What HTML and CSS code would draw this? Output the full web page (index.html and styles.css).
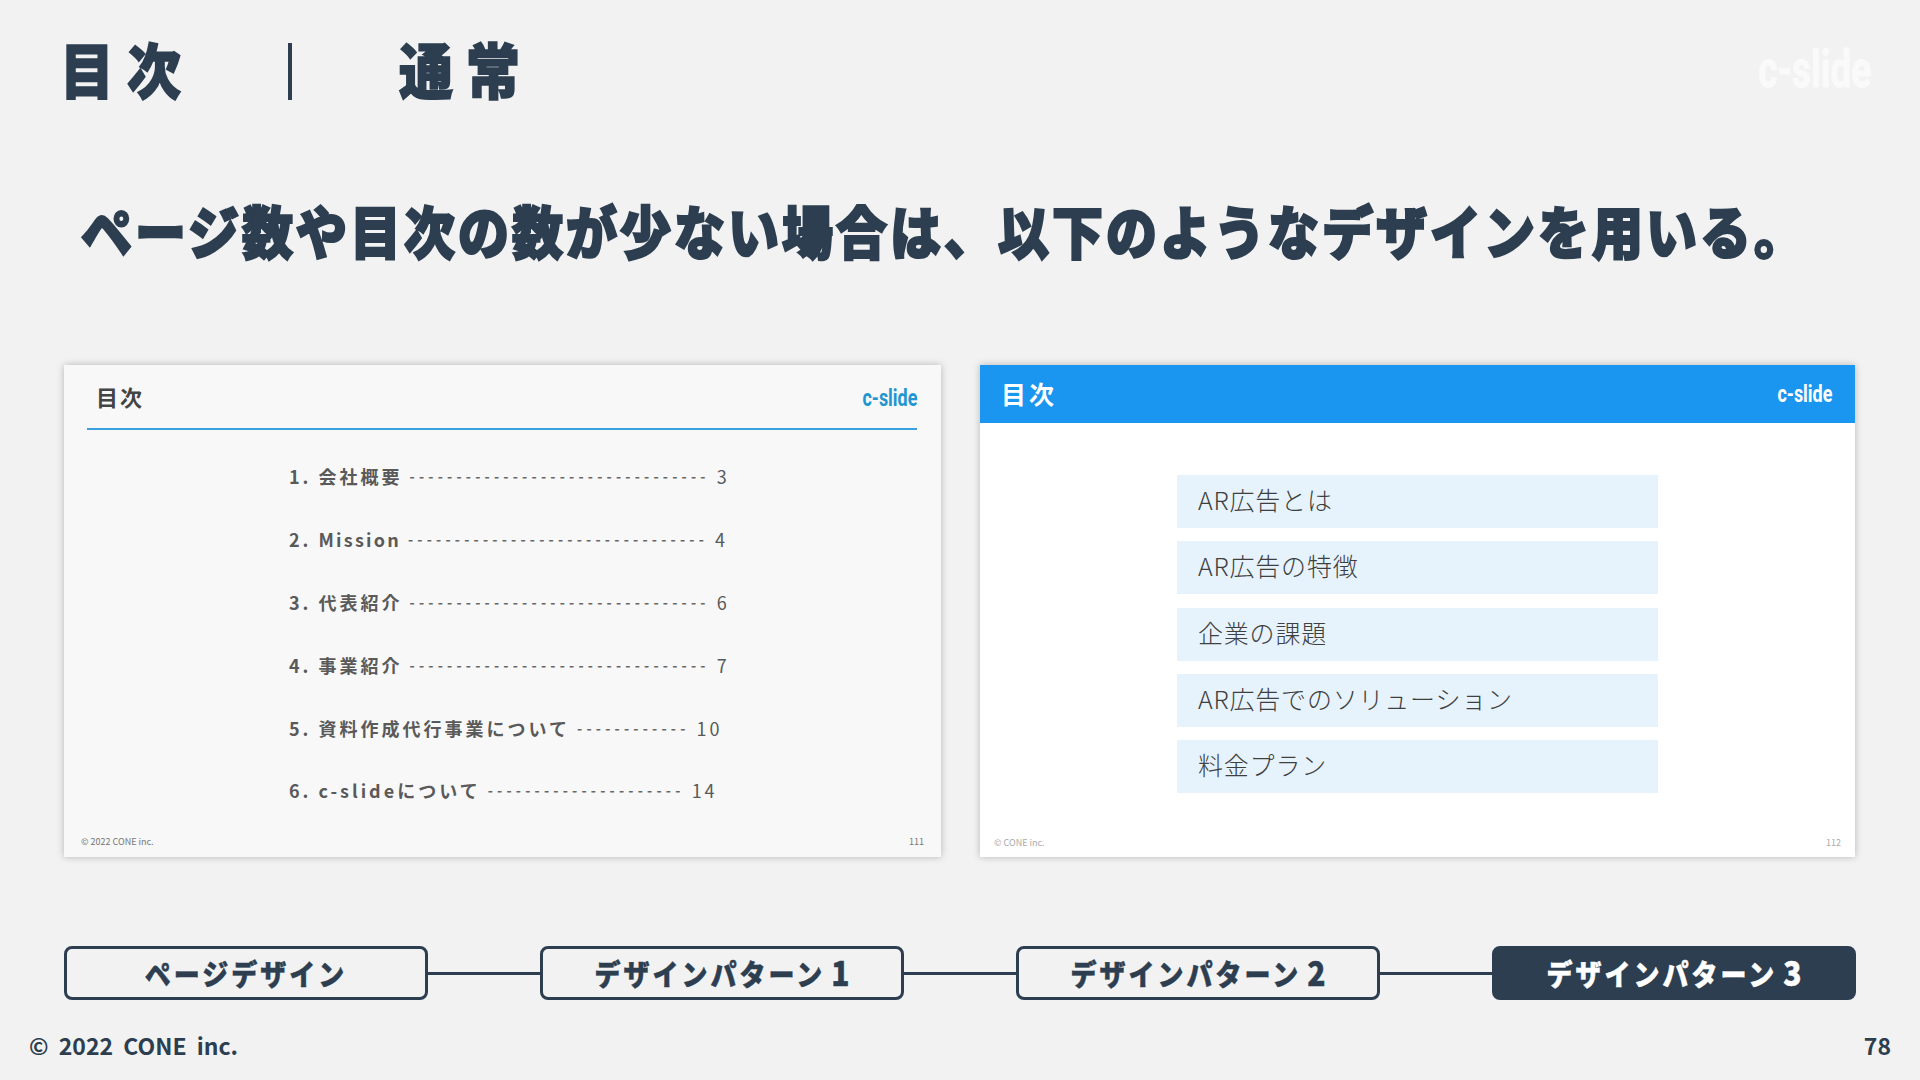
FILE: index.html
```html
<!DOCTYPE html>
<html lang="ja">
<head>
<meta charset="utf-8">
<title>目次 | 通常</title>
<link rel="stylesheet" href="styles.css">
</head>
<body>
<div class="slide">
  <header class="top">
    <h1 class="title"><span class="tall">目次</span><i class="bar"></i><span class="tall">通常</span></h1>
    <div class="logo">c-slide</div>
  </header>
  <p class="lead"><span class="tall">ページ数や目次の数が少ない場合は、以下のようなデザインを用いる。</span></p>
  <section class="cards">
    <article class="card card-a">
      <div class="a-head"><span class="a-title">目次</span><span class="a-logo">c-slide</span></div>
      <ol class="toc">
        <li>1. 会社概要 <span class="dash">--------------------------------</span> <span class="num">3</span></li>
        <li><span>2. <span class="latin">Mission</span></span> <span class="dash">--------------------------------</span> <span class="num">4</span></li>
        <li>3. 代表紹介 <span class="dash">--------------------------------</span> <span class="num">6</span></li>
        <li>4. 事業紹介 <span class="dash">--------------------------------</span> <span class="num">7</span></li>
        <li>5. 資料作成代行事業について <span class="dash">------------</span> <span class="num">10</span></li>
        <li>6. c-slideについて <span class="dash">---------------------</span> <span class="num">14</span></li>
      </ol>
      <div class="a-foot"><span>© 2022 CONE inc.</span><span>111</span></div>
    </article>
    <article class="card card-b">
      <div class="b-head"><span class="b-title">目次</span><span class="b-logo">c-slide</span></div>
      <ul class="rows">
        <li>AR広告とは</li>
        <li>AR広告の特徴</li>
        <li>企業の課題</li>
        <li>AR広告でのソリューション</li>
        <li>料金プラン</li>
      </ul>
      <div class="b-foot"><span>© CONE inc.</span><span>112</span></div>
    </article>
  </section>
  <nav class="steps">
    <div class="step"><span class="tall">ページデザイン</span></div>
    <i class="link"></i>
    <div class="step"><span class="tall">デザインパターン<span class="digit">1</span></span></div>
    <i class="link"></i>
    <div class="step"><span class="tall">デザインパターン<span class="digit">2</span></span></div>
    <i class="link"></i>
    <div class="step step-on"><span class="tall">デザインパターン<span class="digit">3</span></span></div>
  </nav>
  <footer class="foot"><span>© 2022 CONE inc.</span><span>78</span></footer>
</div>
</body>
</html>
```
FILE: styles.css
```css
* { box-sizing: border-box; }
html, body { margin: 0; padding: 0; }
body { background: #f2f2f2; font-family: "Noto Sans CJK JP", "Noto Sans", sans-serif; color: #2c3e50; }
.slide { width: 1920px; height: 1080px; overflow: hidden; display: flex; flex-direction: column; }
.tall { display: inline-block; transform: scaleY(1.12); }

.top { height: 144px; padding: 0 49px 0 60px; display: flex; justify-content: space-between; align-items: center; }
.title { margin: 0 0 8px; display: flex; align-items: center; font-size: 54px; font-weight: 900; line-height: 1; letter-spacing: 13px; -webkit-text-stroke: 1.5px #2c3e50; }
.bar { width: 4px; height: 57px; background: #2c3e50; margin: 6px 107px 0 94px; }
.logo { font-family: "Roboto", sans-serif; font-weight: 700; font-size: 52px; color: #fafafa; line-height: 1; margin-bottom: 4px; transform: scaleX(.71); transform-origin: right center; -webkit-text-stroke: 1px #fafafa; }

.lead { margin: 0; height: 221px; padding: 57px 0 0 81px; font-size: 51px; font-weight: 900; line-height: 56px; letter-spacing: 3px; white-space: nowrap; -webkit-text-stroke: 2px #2c3e50; }

.cards { padding: 0 64px; display: flex; justify-content: space-between; height: 581px; }
.card { height: 492px; display: flex; flex-direction: column; box-shadow: 0 0 7px rgba(0,0,0,.25); }
.card-a { background: #f8f8f8; color: #555; width: 877px; }
.card-b { background: #fff; color: #555; width: 875px; margin-right: 1px; }

.a-head { margin: 0 24px 0 23px; height: 65px; border-bottom: 2px solid #3ba0de; display: flex; justify-content: space-between; align-items: center; padding: 0 0 3px 9px; }
.a-title { font-size: 22px; font-weight: 700; letter-spacing: 2px; color: #444; padding-top: 1px; }
.a-logo, .b-logo { font-family: "Roboto", sans-serif; font-weight: 700; font-size: 23px; transform: scaleX(.78); transform-origin: right center; }
.a-logo { color: #1f96cf; padding-top: 6px; }
.toc { list-style: none; margin: 15px 0 0; padding: 0 0 0 225px; flex: 1; }
.toc li { height: 62.8px; display: flex; align-items: center; gap: 7px; font-size: 18px; font-weight: 700; letter-spacing: 3px; white-space: nowrap; color: #5a5a5a; }
.latin { letter-spacing: 2.2px; }
.dash { font-weight: 700; letter-spacing: 4.2px; font-size: 14px; color: #666; }
.num { font-weight: 400; }
.a-foot, .b-foot { display: flex; justify-content: space-between; font-size: 9px; line-height: 14px; }
.a-foot { padding: 0 17px 8px; color: #777; }

.b-head { height: 58px; background: #1a96f0; color: #fff; display: flex; justify-content: space-between; align-items: center; padding: 0 23px 2px 21px; }
.b-title { font-size: 25px; font-weight: 700; letter-spacing: 3px; }
.b-logo { color: #fff; padding-top: 2px; }
.rows { list-style: none; margin: 52px 0 0 197px; padding: 0; width: 481px; flex: 1; display: flex; flex-direction: column; gap: 13.1px; }
.rows li { height: 53.2px; flex: none; background: #e6f3fd; display: flex; align-items: center; padding: 0 0 5px 21px; font-size: 25px; font-weight: 300; letter-spacing: .8px; color: #3f3f3f; }
.b-foot { padding: 0 14px 7px; color: #aaa; }

.steps { height: 54px; padding: 0 64px; display: flex; align-items: center; flex: none; }
.step { width: 364px; height: 54px; flex: none; border: 3px solid #2c3e50; border-radius: 8px; padding-top: 1px; display: flex; align-items: center; justify-content: center; font-size: 26px; font-weight: 900; line-height: 38px; letter-spacing: 3px; color: #2c3e50; -webkit-text-stroke: .4px; }
.digit { font-size: 30px; line-height: 0; margin-left: 6px; letter-spacing: 0; }
.step-on { background: #2c3e50; color: #fff; }
.link { flex: 1; height: 3px; background: #2c3e50; }

.foot { flex: 1; padding: 22px 29px 0; display: flex; justify-content: space-between; font-size: 23px; font-weight: 700; line-height: 46px; word-spacing: 5px; }
```
